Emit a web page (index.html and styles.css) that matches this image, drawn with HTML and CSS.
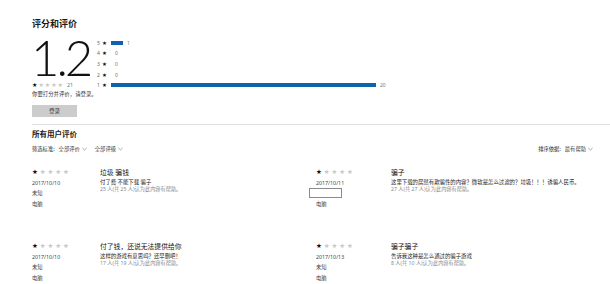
FILE: index.html
```html
<!DOCTYPE html>
<html lang="zh-CN">
<head>
<meta charset="utf-8">
<title>评分和评价</title>
<link rel="stylesheet" href="styles.css">
</head>
<body>
<div class="page">
  <h2 class="title">评分和评价</h2>
  <div class="summary">
    <div class="score">
      <div class="big">1.2</div>
      <div class="mini-stars"><span class="on">★</span><span class="off">★★★★</span><span class="total">21</span></div>
    </div>
    <div class="hist">
      <div class="hrow"><span class="hnum">5</span><span class="hstar">★</span><span class="bar" style="width:12px"></span><span class="hcount">1</span></div>
      <div class="hrow"><span class="hnum">4</span><span class="hstar">★</span><span class="bar" style="width:0px"></span><span class="hcount">0</span></div>
      <div class="hrow"><span class="hnum">3</span><span class="hstar">★</span><span class="bar" style="width:0px"></span><span class="hcount">0</span></div>
      <div class="hrow"><span class="hnum">2</span><span class="hstar">★</span><span class="bar" style="width:0px"></span><span class="hcount">0</span></div>
      <div class="hrow"><span class="hnum">1</span><span class="hstar">★</span><span class="bar" style="width:265px"></span><span class="hcount">20</span></div>
    </div>
  </div>
  <p class="hint">你要打分并评价，请登录。</p>
  <button class="login">登录</button>
  <div class="sep"></div>
  <h3 class="sub">所有用户评价</h3>
  <div class="filters">
    <div class="filter-left">
      <span class="flabel">筛选标准:</span>
      <span class="fopt">全部评价<svg class="chev" viewBox="0 0 6 4" width="5" height="4"><path d="M0.5 0.8 L3 3.2 L5.5 0.8" fill="none" stroke="#777" stroke-width="0.8"/></svg></span>
      <span class="fopt">全部评级<svg class="chev" viewBox="0 0 6 4" width="5" height="4"><path d="M0.5 0.8 L3 3.2 L5.5 0.8" fill="none" stroke="#777" stroke-width="0.8"/></svg></span>
    </div>
    <div class="filter-right">
      <span class="flabel">排序依据:</span>
      <span class="fopt">最有帮助<svg class="chev" viewBox="0 0 6 4" width="5" height="4"><path d="M0.5 0.8 L3 3.2 L5.5 0.8" fill="none" stroke="#777" stroke-width="0.8"/></svg></span>
    </div>
  </div>
  <div class="reviews">
    <div class="review">
      <div class="meta">
        <div class="rstars"><span class="on">★</span><span class="off">★★★★</span></div>
        <div class="mline">2017/10/10</div>
        <div class="mline">未知</div>
        <div class="mline">电脑</div>
      </div>
      <div class="body">
        <div class="rtitle">垃圾 骗钱</div>
        <div class="rtext">付了费 不能下载 骗子</div>
        <div class="rhelp">25 人(共 25 人)认为此内容有帮助。</div>
      </div>
    </div>
    <div class="review review-right">
      <div class="meta meta-wide">
        <div class="rstars"><span class="on">★</span><span class="off">★★★★</span></div>
        <div class="mline">2017/10/11</div>
        <div class="mline"><span class="namebox"></span></div>
        <div class="mline">电脑</div>
      </div>
      <div class="body">
        <div class="rtitle">骗子</div>
        <div class="rtext">这里下载的居然有欺骗性的内容？微软是怎么过滤的？垃圾！！！诱骗人民币。</div>
        <div class="rhelp">27 人(共 27 人)认为此内容有帮助。</div>
      </div>
    </div>
    <div class="review">
      <div class="meta">
        <div class="rstars"><span class="on">★</span><span class="off">★★★★</span></div>
        <div class="mline">2017/10/10</div>
        <div class="mline">未知</div>
        <div class="mline">电脑</div>
      </div>
      <div class="body">
        <div class="rtitle">付了钱，还说无法提供给你</div>
        <div class="rtext">这样的游戏有意思吗？还早删吧！</div>
        <div class="rhelp">17 人(共 19 人)认为此内容有帮助。</div>
      </div>
    </div>
    <div class="review review-right">
      <div class="meta meta-wide">
        <div class="rstars"><span class="on">★</span><span class="off">★★★★</span></div>
        <div class="mline">2017/10/13</div>
        <div class="mline">未知</div>
        <div class="mline">电脑</div>
      </div>
      <div class="body">
        <div class="rtitle">骗子骗子</div>
        <div class="rtext">告诉我这种是怎么通过的骗子游戏</div>
        <div class="rhelp">8 人(共 10 人)认为此内容有帮助。</div>
      </div>
    </div>
  </div>
</div>
</body>
</html>
```

FILE: styles.css
```css
html, body {
  margin: 0;
  padding: 0;
  background: #ffffff;
}
body {
  font-family: "Noto Sans", "Noto Sans CJK SC", sans-serif;
  color: #1a1a1a;
}
.page {
  box-sizing: border-box;
  padding: 18px 0 0 32px;
  width: 610px;
  height: 284px;
  overflow: hidden;
}
.title {
  margin: 0;
  font-size: 9px;
  line-height: 12px;
  font-weight: 700;
  font-family: "Noto Sans CJK SC", sans-serif;
}
.summary {
  display: flex;
  margin-top: 7.5px;
}
.score {
  width: 65px;
}
.big {
  font-family: "Lato", "Noto Sans", sans-serif;
  font-weight: 300;
  font-size: 49px;
  line-height: 38px;
  letter-spacing: -3px;
  margin-left: -1px;
  color: #111;
}
.mini-stars {
  margin-top: 4.5px;
  font-family: "DejaVu Sans", sans-serif;
  font-size: 6px;
  line-height: 10px;
  letter-spacing: 1px;
}
.on { color: #111; }
.off { color: #c8c8c8; }
.total {
  font-family: "Noto Sans", sans-serif;
  font-size: 5.5px;
  color: #777;
  margin-left: 3px;
  letter-spacing: 0;
}
.hist {
  display: flex;
  flex-direction: column;
}
.hrow {
  display: flex;
  align-items: center;
  height: 10.6px;
}
.hnum {
  font-size: 5px;
  color: #666;
  width: 5px;
}
.hstar {
  font-family: "DejaVu Sans", sans-serif;
  font-size: 5.5px;
  color: #111;
  width: 9px;
}
.bar {
  display: block;
  height: 3.5px;
  background: #0f63ad;
}
.hcount {
  font-size: 5px;
  color: #777;
  margin-left: 4px;
}
.hint {
  margin: 0;
  font-size: 5.4px;
  line-height: 9px;
  color: #333;
}
.login {
  display: block;
  margin-top: 5.5px;
  width: 45px;
  height: 12px;
  padding: 0;
  border: none;
  background: #cccccc;
  color: #333;
  font-family: "Noto Sans CJK SC", sans-serif;
  font-size: 5.5px;
  line-height: 12px;
}
.sep {
  margin-top: 7px;
  height: 1px;
  background: #e0e0e0;
}
.sub {
  margin: 4px 0 0 0;
  font-size: 7.5px;
  line-height: 10px;
  font-weight: 700;
  font-family: "Noto Sans CJK SC", sans-serif;
}
.filters {
  display: flex;
  justify-content: space-between;
  margin-top: 5px;
  padding-right: 17px;
  font-size: 5.3px;
  line-height: 10px;
}
.filter-left, .filter-right {
  display: flex;
  align-items: center;
}
.flabel {
  color: #222;
  margin-right: 4px;
}
.fopt {
  display: flex;
  align-items: center;
  color: #444;
  margin-right: 8px;
}
.filter-right .fopt { margin-right: 0; }
.chev {
  margin-left: 2px;
}
.reviews {
  display: grid;
  grid-template-columns: 284px 1fr;
  grid-auto-rows: 74px;
  margin-top: 13px;
}
.review {
  display: flex;
}
.meta {
  width: 68px;
  flex-shrink: 0;
}
.meta-wide {
  width: 75px;
}
.rstars {
  font-family: "DejaVu Sans", sans-serif;
  font-size: 6.5px;
  line-height: 11px;
  letter-spacing: 1.9px;
}
.mline {
  font-size: 5.3px;
  line-height: 10.5px;
  height: 10.5px;
  color: #444;
}
.namebox {
  display: block;
  width: 31px;
  height: 7.5px;
  margin-left: -7px;
  border: 1px solid #8a8a8a;
  background: #fff;
}
.body {
  flex: 1;
}
.rtitle {
  font-size: 6.8px;
  line-height: 11px;
  color: #111;
}
.rtext {
  margin-top: 1.5px;
  font-size: 5.4px;
  line-height: 7px;
  color: #222;
  white-space: nowrap;
}
.rhelp {
  font-size: 5.2px;
  line-height: 7px;
  color: #8a8a8a;
  white-space: nowrap;
}
```
